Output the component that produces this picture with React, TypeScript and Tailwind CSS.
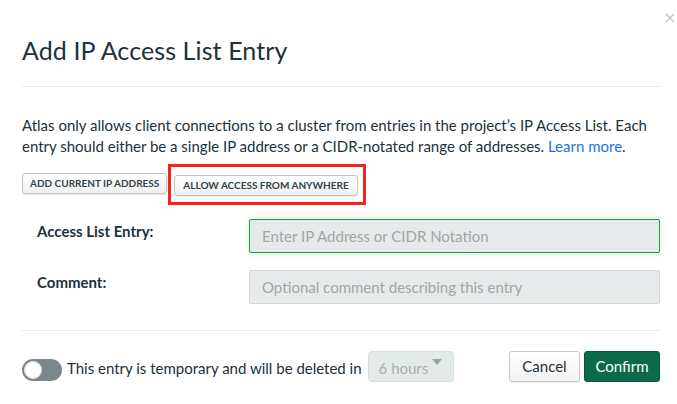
import React from 'react';
import { useState } from 'react';

const App = () => {
	const [temporary, setTemporary] = useState(false);

	return (
		<div className="relative w-[677px] h-[404px] bg-white text-[#21313c] font-['Lato','Noto_Sans',sans-serif] overflow-hidden">
			{/* Close */}
			<button className="absolute top-[13px] right-[2px] text-[#c8c8c8]">
				<svg width="10" height="10" viewBox="0 0 10 10" fill="none" stroke="currentColor" strokeWidth="1.6">
					<path d="M1 1L9 9M9 1L1 9" />
				</svg>
			</button>

			{/* Header */}
			<div className="pl-[22px] pr-[17px] pt-[34px] pb-[20px]">
				<h2 className="text-[25px] leading-[32px] font-normal tracking-[0.1px]">Add IP Access List Entry</h2>
			</div>
			<div className="ml-[22px] mr-[17px] border-t border-[#e7eeec]" />

			{/* Body */}
			<div className="pl-[22px] pr-[17px] pt-[28px]">
				<p className="text-[15px] leading-[21px] whitespace-nowrap">
					Atlas only allows client connections to a cluster from entries in the project’s IP Access List. Each
					<br />
					entry should either be a single IP address or a CIDR-notated range of addresses.{' '}
					<a href="#" className="text-[#1a73e8]">Learn more</a>.
				</p>

				<div className="mt-[14px] flex items-center gap-[7px]">
					<button className="h-[21px] px-[7px] rounded-[3px] border border-[#c5c5c5] bg-gradient-to-b from-white to-[#f0f0f0] shadow-[0_1px_1px_rgba(0,0,0,0.1)] text-[10px] font-bold text-[#33434c]">
						ADD CURRENT IP ADDRESS
					</button>
					<div className="relative">
						<button className="h-[21px] px-[8px] rounded-[3px] border border-[#c5c5c5] bg-gradient-to-b from-white to-[#f0f0f0] shadow-[0_1px_1px_rgba(0,0,0,0.1)] text-[10px] font-bold text-[#33434c]">
							ALLOW ACCESS FROM ANYWHERE
						</button>
						{/* highlight */}
						<div className="absolute -left-[6px] -top-[7px] -right-[8px] -bottom-[9px] border-[3px] border-[#f5231b] pointer-events-none" />
					</div>
				</div>

				{/* Form */}
				<div className="mt-[23px] flex flex-col gap-[17px]">
					<div className="flex items-start">
						<label className="w-[227px] shrink-0 pl-[15px] pt-[2px] text-[15px] font-bold leading-[20px]">Access List Entry:</label>
						<input
							autoFocus
							placeholder="Enter IP Address or CIDR Notation"
							className="flex-1 h-[34px] px-[12px] bg-[#e7eaea] border border-[#13a052] rounded-[2px] text-[15px] placeholder:text-[#a0a7a6] outline-none shadow-[0_0_6px_rgba(120,180,60,0.25)]"
						/>
					</div>
					<div className="flex items-start">
						<label className="w-[227px] shrink-0 pl-[15px] pt-[2px] text-[15px] font-bold leading-[20px]">Comment:</label>
						<input
							placeholder="Optional comment describing this entry"
							className="flex-1 h-[34px] px-[12px] bg-[#e7eaea] border border-[#d3d8d7] rounded-[2px] text-[15px] placeholder:text-[#a0a7a6] outline-none"
						/>
					</div>
				</div>
			</div>

			<div className="ml-[22px] mr-[17px] mt-[26px] border-t border-[#e7eeec]" />

			{/* Footer */}
			<div className="pl-[22px] pr-[17px] pt-[20px] flex items-start justify-between">
				<div className="flex items-start">
					<button
						onClick={() => setTemporary((prev) => !prev)}
						className="relative w-[40px] h-[22px] rounded-full bg-[#7c878b] mt-[8px]"
					>
						<span className="absolute left-[2px] top-[2px] w-[18px] h-[18px] rounded-full bg-white border border-[#dfe3e3]" />
					</button>
					<span className="ml-[5px] mt-[7px] text-[15px] leading-[20px]">This entry is temporary and will be deleted in</span>
					<div className="ml-[6px] relative w-[86px] h-[31px] rounded-[4px] bg-[#e4eae8] border border-[#d7dedc] text-[15px] leading-[20px] text-[#a8afad] pl-[10px] pt-[6px]">
						6 hours
						<span className="absolute right-[11px] top-[7px] w-0 h-0 border-l-[5px] border-r-[5px] border-t-[6px] border-l-transparent border-r-transparent border-t-[#9aa2a0]" />
					</div>
				</div>
				<div className="flex items-center gap-[4px]">
					<button className="h-[31px] w-[71px] rounded-[3px] border border-[#c8c8c8] bg-gradient-to-b from-white to-[#f3f3f3] shadow-[0_1px_1px_rgba(0,0,0,0.06)] text-[15px] text-[#21313c]">
						Cancel
					</button>
					<button className="h-[31px] w-[76px] rounded-[3px] border border-[#055a3d] bg-[#0b6a4a] text-[15px] text-white">
						Confirm
					</button>
				</div>
			</div>
		</div>
	);
};

export default App;
